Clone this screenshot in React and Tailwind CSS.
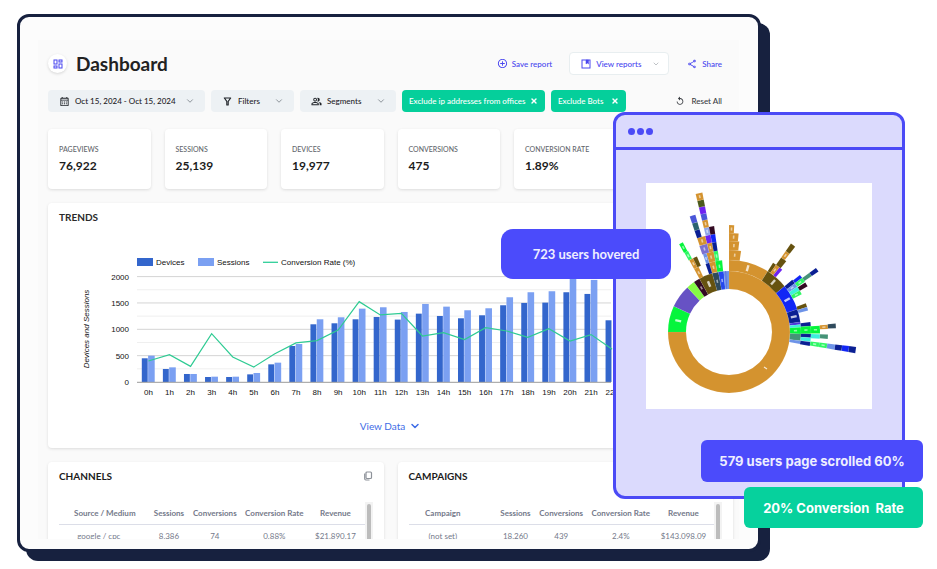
import React from "react";
import {
  MdOutlineDashboard,
  MdOutlineCalendarMonth,
  MdOutlinePeopleAlt,
  MdAddCircleOutline,
  MdOutlineShare,
  MdReplay,
} from "react-icons/md";
import { ChevronDown, X } from "lucide-react";

const STATS = [
  ["PAGEVIEWS", "76,922"],
  ["SESSIONS", "25,139"],
  ["DEVICES", "19,977"],
  ["CONVERSIONS", "475"],
  ["CONVERSION RATE", "1.89%"],
  ["REVENUE", "$164,988"],
];

const DEVICES = [450, 247, 152, 95, 95, 145, 335, 683, 1095, 1114, 1190, 1234, 1184, 1297, 1253, 1209, 1266, 1456, 1500, 1506, 1703, 1671, 1171];
const SESSIONS = [500, 278, 152, 101, 101, 171, 367, 721, 1190, 1228, 1392, 1418, 1329, 1481, 1430, 1361, 1399, 1608, 1703, 1722, 1990, 1937];
const RATE = [399, 519, 297, 918, 475, 285, 538, 741, 785, 987, 1525, 1272, 1304, 873, 937, 804, 1032, 968, 848, 1013, 778, 899, 620];

const barTop = (v) => 130 - (v / 500) * 26.35;
const hourX = (i) => 100.4 + i * 21.08;

function TrendsChart() {
  return (
    <svg viewBox="0 0 685 148" className="block h-auto w-full" role="img" aria-label="Devices, sessions and conversion rate by hour">
      <g fontFamily="Liberation Sans, Arial, sans-serif" fontSize="8" fill="#111" stroke="none">
        <rect x="89" y="6" width="16" height="8" fill="#3366cc" />
        <text x="108" y="13">Devices</text>
        <rect x="150" y="6" width="16" height="8" fill="#7ba0f2" />
        <text x="169" y="13">Sessions</text>
        <path d="M215 10.3h15" stroke="#2fcf99" strokeWidth="1.3" />
        <text x="233" y="13">Conversion Rate (%)</text>
        <text transform="translate(40.5 77) rotate(-90)" textAnchor="middle" fontStyle="italic">Devices and Sessions</text>
        {[250, 750, 1250, 1750].map((v) => (
          <path key={v} d={`M89 ${barTop(v)}H563`} stroke="#efefef" />
        ))}
        {[500, 1000, 1500, 2000].map((v) => (
          <path key={v} d={`M89 ${barTop(v)}H563`} stroke="#d4d4d4" />
        ))}
        {[0, 500, 1000, 1500, 2000].map((v) => (
          <text key={v} x="81" y={barTop(v) + 3} textAnchor="end">{v}</text>
        ))}
        {DEVICES.map((v, i) => (
          <g key={i}>
            <rect x={hourX(i) - 6.6} y={barTop(v)} width="5.900" height={130 - barTop(v)} fill="#3366cc" />
            <text x={hourX(i)} y="142.500" textAnchor="middle">{i}h</text>
          </g>
        ))}
        {SESSIONS.map((v, i) => (
          <rect key={i} x={hourX(i) - 0.3} y={barTop(v)} width="6.600" height={130 - barTop(v)} fill="#7ba0f2" />
        ))}
        <path d="M89 130.300H563" stroke="#9a9a9a" />
        <polyline
          points={RATE.map((v, i) => `${hourX(i)},${barTop(v)}`).join(" ")}
          fill="none"
          stroke="#2fcb93"
          strokeWidth="1.2"
        />
      </g>
    </svg>
  );
}

const ORANGE = "#d4932f";
const OLIVE = "#66520f";
const NAVY = "#0a1f93";
const BLUE = "#1226f5";
const SKY = "#6d93e8";
const INDIGO = "#4a56d8";
const VIOLET = "#6d22f2";
const PURPLE = "#6752c4";
const GREEN = "#05f53c";
const MINT = "#2ef765";
const CYAN = "#3df0dc";
const TEAL = "#459377";
const MAROON = "#330a22";
const SLATE = "#2f4a5c";

// [inner radius, outer radius, start angle, end angle, colour, has label]
const SEGMENTS = [
  [43, 61, 0, 270, ORANGE],
  [43, 61, 270, 295, GREEN, 1],
  [43, 61, 295, 317, PURPLE],
  [43, 61, 317, 325, "#85fa45"],
  [43, 61, 325, 331, MAROON, 1],
  [43, 61, 331, 344, OLIVE, 1],
  [43, 61, 344, 350, SLATE, 1],
  [43, 61, 350, 355, "#2448ee", 1],
  [43, 61, 355, 360, SKY],
  [43, 61, 356.5, 357.3, INDIGO],
  [61, 72, 0, 32.5, ORANGE, 1],
  [61, 72, 32.5, 50.5, OLIVE, 1],
  [61, 72, 50.5, 71.5, BLUE, 1],
  [61, 72, 71.5, 82, NAVY, 1],
  [61, 72, 82, 84, "#4a35d8"],
  [61, 72, 84, 86.2, CYAN],
  [61, 72, 86.2, 91.5, GREEN, 1],
  [61, 72, 91.5, 97, TEAL],
  [61, 72, 97, 99.5, SKY],
  [72, 82, 0, 8.5, ORANGE, 1],
  [82, 91, 0, 6.5, ORANGE, 1],
  [91, 99, 0, 5.6, ORANGE, 1],
  [99, 107, 0, 2.8, ORANGE, 1],
  [72, 82, 32.5, 35, OLIVE],
  [72, 82, 35, 38, ORANGE, 1],
  [72, 82, 38, 40.5, VIOLET],
  [82, 91, 35, 39, OLIVE],
  [91, 99, 35, 37.8, ORANGE, 1],
  [99, 108, 35, 37.8, OLIVE],
  [72, 82, 50.5, 53.5, NAVY],
  [72, 82, 53.5, 56.5, SKY, 1],
  [72, 82, 56.5, 59.5, CYAN],
  [72, 82, 59.5, 62.5, MINT, 1],
  [82, 91, 51.2, 53.5, BLUE],
  [82, 91, 53.5, 56.5, MINT, 1],
  [82, 91, 57, 59.8, MAROON],
  [91, 100, 53.6, 56, TEAL],
  [100, 108, 53.6, 56, NAVY],
  [72, 82, 69.5, 72.3, OLIVE],
  [72, 82, 72.3, 74.8, SKY],
  [72, 82, 83, 85.8, NAVY],
  [72, 82, 85.8, 91.3, GREEN, 1],
  [82, 91, 86, 91, GREEN, 1],
  [91, 99, 85.8, 88.3, ORANGE, 1],
  [99, 107, 85.5, 88, SLATE],
  [72, 82, 91.4, 94, NAVY],
  [72, 82, 94, 96.8, CYAN],
  [82, 91, 91.4, 94.3, CYAN],
  [91, 99, 91.4, 94, TEAL],
  [72, 82, 97, 99.8, NAVY],
  [82, 91, 96.6, 99.5, MINT, 1],
  [91, 99, 96.6, 99.5, MINT, 1],
  [99, 107, 96.7, 99.5, SKY],
  [107, 114, 96.7, 99.5, NAVY],
  [114, 121, 96.7, 99.5, BLUE],
  [121, 128, 96.7, 99.5, NAVY],
  [61, 72, -16, -11, ORANGE, 1],
  [72, 82, -16, -10.8, ORANGE, 1],
  [82, 91, -14, -10.8, ORANGE, 1],
  [91, 99, -14, -10.8, VIOLET],
  [99, 107, -13.6, -10.8, "#8fa5e8", 1],
  [107, 114.5, -13.6, -10.8, ORANGE, 1],
  [114.5, 121, -13.6, -10.8, INDIGO],
  [121, 128, -13.6, -10.8, VIOLET],
  [128, 135, -13.6, -10.8, "#4b5a1c"],
  [135, 142, -13.6, -10.8, ORANGE, 1],
  [61, 72, -11, -5.5, GREEN, 1],
  [72, 82, -10.8, -7.8, MINT, 1],
  [82, 91, -10.8, -8, NAVY],
  [91, 99, -10.8, -8, BLUE],
  [99, 107, -10.8, -8, MAROON],
  [61, 72, -19, -16, NAVY],
  [72, 82, -18.5, -16, SKY, 1],
  [82, 91, -19, -14, "#7b70d0", 1],
  [91, 99, -18.8, -14, ORANGE, 1],
  [99, 107, -18.8, -16, NAVY],
  [107, 114.5, -18.8, -16, "#2b6270"],
  [114.5, 122, -18.8, -16, INDIGO],
  [61, 72, -29, -25, ORANGE, 1],
  [72, 82, -29, -26, ORANGE, 1],
  [72, 82, -26, -23, OLIVE],
  [82, 91, -29.4, -26.8, MINT, 1],
  [91, 101, -29.6, -27.2, GREEN, 1],
];

function polar(r, deg) {
  const a = (deg * Math.PI) / 180;
  return `${(83 + r * Math.sin(a)).toFixed(2)} ${(149 - r * Math.cos(a)).toFixed(2)}`;
}

function arcPath([r0, r1, a0, a1]) {
  const large = a1 - a0 > 180 ? 1 : 0;
  return `M${polar(r0, a0)}L${polar(r1, a0)}A${r1} ${r1} 0 ${large} 1 ${polar(r1, a1)}L${polar(r0, a1)}A${r0} ${r0} 0 ${large} 0 ${polar(r0, a0)}Z`;
}

function Sunburst() {
  return (
    <svg viewBox="0 0 226 226" className="block h-auto w-full bg-white" role="img" aria-label="User path sunburst">
      {SEGMENTS.map((s, i) => (
        <path key={i} d={arcPath(s)} fill={s[4]} stroke="#fff" strokeOpacity="0.2" strokeWidth="0.3" />
      ))}
      {SEGMENTS.filter((s) => s[5]).map((s, i) => {
        const mid = (s[2] + s[3]) / 2;
        const r = (s[0] + s[1]) / 2;
        const wide = s[3] - s[2] > 9;
        const len = wide ? 3 : 1.6;
        return (
          <path
            key={i}
            d={`M${polar(r - len, mid)}L${polar(r + len, mid)}`}
            stroke="#fff"
            strokeOpacity={wide ? 0.75 : 0.55}
            strokeWidth={wide ? 2.4 : 1.6}
          />
        );
      })}
      <path d="M118 184l3 2" stroke="#fff" strokeOpacity="0.8" strokeWidth="1.2" />
    </svg>
  );
}

function FunnelIcon({ className }) {
  return (
    <svg viewBox="0 0 11 11" className={className} fill="none" stroke="currentColor" strokeWidth="1.1" strokeLinejoin="round">
      <path d="M2.300 2H8.700L6.200 5.400V9H4.800V5.400Z" />
    </svg>
  );
}

function Dropdown({ icon: Icon, label, className }) {
  return (
    <button type="button" aria-haspopup="menu" className={`flex h-[22px] items-center rounded bg-[#edf1f4] pr-2.5 pl-[11px] text-[#1f2328] ${className}`}>
      <Icon className="size-[11px] shrink-0" />
      <span className="flex-1 pl-[5px] text-left">{label}</span>
      <ChevronDown className="size-[10px] text-[#7b8289]" />
    </button>
  );
}

function Chip({ label, className }) {
  return (
    <button type="button" className={`flex h-[22px] items-center justify-between rounded bg-[#05cf9b] px-[7px] text-white ${className}`}>
      <span>{label}</span>
      <X className="size-[8px]" strokeWidth={4} />
    </button>
  );
}

function DataCard({ title, columns, row, widths, headClass, cellClass, copy }) {
  return (
    <section className="min-w-0 flex-1 rounded bg-white px-[11px] pt-2 shadow-[0_1px_3px_rgba(0,0,0,0.12)]">
      <div className="flex h-3 items-center justify-between">
        <h2 className="text-[10px] leading-3 font-bold text-[#1c1c1c]">{title}</h2>
        {copy && (
          <button type="button" aria-label="Copy table">
            <svg viewBox="0 0 10 10" className="size-[10px]" fill="none" stroke="#8d9299" strokeWidth="1.2">
              <rect x="3" y="1" width="5.500" height="6.500" rx="1" />
              <path d="M1.700 2.500V7.800Q1.700 9 2.900 9H6.500" />
            </svg>
          </button>
        )}
      </div>
      <div className="mt-5 flex">
        <table className="h-[46px] min-w-0 flex-1 table-fixed text-center text-[8px] leading-[10px] whitespace-nowrap text-[#74798a]">
          <colgroup>
            {widths.map((w, i) => (
              <col key={i} className={w} />
            ))}
          </colgroup>
          <thead>
            <tr className="h-[22px] border-b border-[#dcdee8]">
              {columns.map((c, i) => (
                <th key={c} scope="col" className={`p-0 font-bold ${i === 0 ? headClass : ""}`}>
                  <span className="-mx-2">{c}</span>
                </th>
              ))}
            </tr>
          </thead>
          <tbody>
            <tr className="h-6">
              {row.map((c, i) => (
                <td key={c} className={`p-0 ${i === 0 ? cellClass : ""}`}>
                  {c}
                </td>
              ))}
            </tr>
          </tbody>
        </table>
        <div className="flex w-2 justify-center bg-[#f3f3f3] pt-0.5">
          <div className="w-1 rounded-full bg-[#bcbcbc]" />
        </div>
      </div>
    </section>
  );
}

export default function App() {
  return (
    <div className="relative bg-white pt-[14px] pb-[17px] font-['Lato','Open_Sans',sans-serif] text-[8px] leading-[10px]">
      <main className="mr-[176px] ml-[17px] rounded-xl border-3 border-[#17213f] bg-[#fcfcfc] pt-[23px] pr-[19px] pb-[10px] pl-[18px] shadow-[9px_9px_0_#17213f]">
        <div className="bg-[#fafafa] pt-3 pr-1.5 pl-2.5">
          <header className="flex h-[23px] items-center pr-[11px] font-medium text-[#4946ef]">
            <span className="mr-[9px] flex size-[19px] items-center justify-center rounded-full bg-white shadow-[0_1px_3px_rgba(0,0,0,0.15)]">
              <MdOutlineDashboard className="size-3" />
            </span>
            <h1 className="flex-1 text-[19px] leading-6 font-bold text-[#222]">Dashboard</h1>
            <button type="button" className="mr-[17px] flex items-center gap-1">
              <MdAddCircleOutline className="size-[11px]" />
              Save report
            </button>
            <button type="button" aria-haspopup="menu" className="mr-[18px] flex h-[23px] w-[100px] items-center rounded border border-[#e8eef0] bg-white pr-2 pl-[11px]">
              <svg viewBox="0 0 10 10" className="mr-[5px] size-[10px]" fill="none" stroke="currentColor">
                <rect x="1" y="1" width="8" height="8" />
                <path d="M5 1h2.500v4L6.250 4L5 5Z" fill="currentColor" strokeWidth="0.5" />
              </svg>
              <span className="flex-1 text-left">View reports</span>
              <ChevronDown className="size-[8px] text-[#a0a5ab]" />
            </button>
            <button type="button" className="flex items-center gap-[5px]">
              <MdOutlineShare className="size-[10px]" />
              Share
            </button>
          </header>

          <div className="mt-[15px] flex items-center gap-1.5 pr-[11px] font-medium whitespace-nowrap">
            <Dropdown icon={MdOutlineCalendarMonth} label="Oct 15, 2024 - Oct 15, 2024" className="w-[157px]" />
            <Dropdown icon={FunnelIcon} label="Filters" className="w-[83px]" />
            <Dropdown icon={MdOutlinePeopleAlt} label="Segments" className="w-[96px]" />
            <Chip label="Exclude ip addresses from offices" className="w-[143px]" />
            <Chip label="Exclude Bots" className="w-[75px]" />
            <button type="button" className="ml-auto flex items-center gap-1.5 text-[#3a3d42]">
              <MdReplay className="size-[10px]" />
              Reset All
            </button>
          </div>

          <div className="mt-[17px] grid grid-cols-6 gap-[14px]">
            {STATS.map(([label, value]) => (
              <div key={label} className="h-[60px] rounded bg-white pt-[15px] pl-[11px] shadow-[0_1px_3px_rgba(0,0,0,0.12)]">
                <div className="text-[7px] leading-[10px] font-medium whitespace-nowrap text-[#5f656b]">{label}</div>
                <div className="mt-1 text-[12px] leading-4 font-bold text-[#1c1c1c]">{value}</div>
              </div>
            ))}
          </div>

          <section className="mt-[14px] rounded bg-white pt-2 pb-[15px] shadow-[0_1px_3px_rgba(0,0,0,0.12)]">
            <h2 className="mb-[29px] pl-[11px] text-[10px] leading-3 font-bold text-[#2a2a2a]">TRENDS</h2>
            <TrendsChart />
            <div className="mt-[19px] flex justify-center">
              <button type="button" className="flex items-center gap-1 text-[10px] leading-[14px] text-[#3e6ce6]">
                View Data
                <ChevronDown className="size-3" strokeWidth={3} />
              </button>
            </div>
          </section>

          <div className="-mx-1.5 flex h-[91px] items-start gap-[14px] overflow-hidden px-1.5 pt-[14px]">
            <DataCard
              title="CHANNELS"
              copy
              columns={["Source / Medium", "Sessions", "Conversions", "Conversion Rate", "Revenue"]}
              row={["google / cpc", "8,386", "74", "0.88%", "$21,890.17"]}
              widths={["w-[30%]", "w-[12%]", "w-[18%]", "w-[21%]", "w-[19%]"]}
              headClass=""
              cellClass="pr-3"
            />
            <DataCard
              title="CAMPAIGNS"
              columns={["Campaign", "Sessions", "Conversions", "Conversion Rate", "Revenue"]}
              row={["(not set)", "18,260", "439", "2.4%", "$143,098.09"]}
              widths={["w-[29%]", "w-[12%]", "w-[18%]", "w-[21%]", "w-[20%]"]}
              headClass="pr-5"
              cellClass="pr-5"
            />
          </div>
        </div>
      </main>

      <aside className="absolute top-[112px] right-8 flex h-[387px] w-[292px] flex-col rounded-xl border-3 border-[#4b4af6] bg-[#dbdafd]">
        <div className="flex h-[35px] items-center gap-0.5 border-b-3 border-[#4b4af6] pl-3">
          <span className="size-[7px] rounded-full bg-[#4b4af6]" />
          <span className="size-[7px] rounded-full bg-[#4b4af6]" />
          <span className="size-[7px] rounded-full bg-[#4b4af6]" />
        </div>
        <div className="mt-[33px] mr-[30px] ml-[30px]">
          <Sunburst />
        </div>
      </aside>

      <div className="absolute top-[229px] right-[266px] flex h-[50px] w-[170px] items-center justify-center rounded-xl bg-[#4b4bfb] text-[13px] font-bold text-[#eeeeff]">
        723 users hovered
      </div>
      <div className="absolute top-[440px] right-[14px] flex h-[42px] w-[222px] items-center justify-center rounded-md bg-[#4b4bfb] font-['Inter',sans-serif] text-[13px] font-bold text-[#eeeeff]">
        579 users page scrolled 60%
      </div>
      <div className="absolute top-[487px] right-[14px] flex h-[41px] w-[179px] items-center justify-center rounded-md bg-[#06d19d] font-['Inter',sans-serif] text-[13px] font-bold text-white">
        20% Conversion&nbsp; Rate
      </div>
    </div>
  );
}
